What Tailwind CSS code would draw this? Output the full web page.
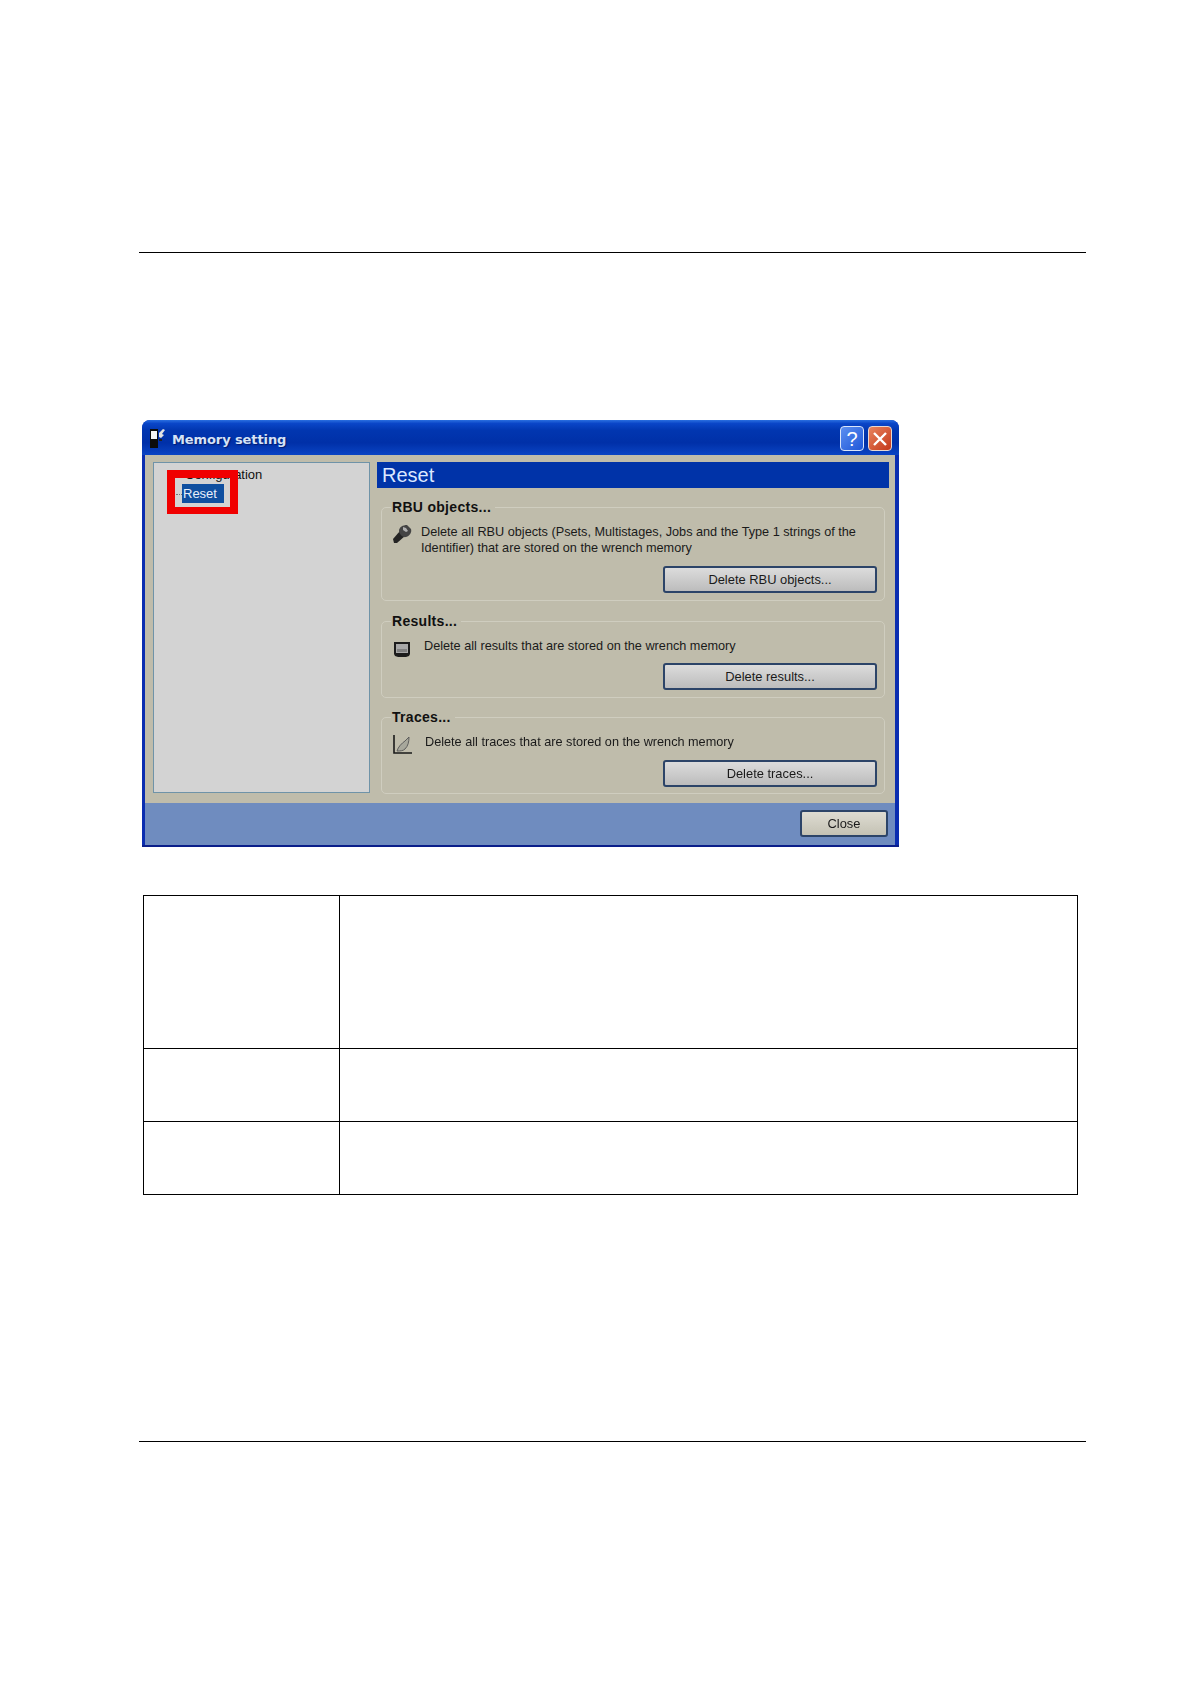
<!DOCTYPE html>
<html lang="en">
<head>
  <meta charset="UTF-8">
  <meta name="viewport" content="width=device-width, initial-scale=1">
  <title>Memory setting</title>
  <script src="https://cdn.jsdelivr.net/npm/@tailwindcss/browser@4"></script>
</head>
<body class="bg-white font-['Liberation_Sans',Arial,sans-serif]">
  <div class="h-[1684px] pt-[252px] overflow-hidden">
    <div class="ml-[139px] w-[947px] h-px bg-black"></div>

    <!-- dialog screenshot -->
    <div class="relative mt-[167px] ml-[142px] w-[757px] h-[427px] flex flex-col rounded-t-lg overflow-hidden blur-[0.5px] bg-[#0a2db0]">
      <div class="h-[35px] shrink-0 flex items-center pt-[2px] pl-[8px] pr-[7px] bg-[linear-gradient(180deg,#2a6fe0_0%,#0a46c8_10%,#0136b0_30%,#0030a8_65%,#0a44c4_100%)]">
        <svg class="w-[17px] h-[19px] shrink-0" viewBox="0 0 17 19">
          <path d="M0 0h8v19H0z" fill="#0c0c0c"/>
          <path d="M1 2h6v8H1z" fill="#f4f4f4"/>
          <path d="M9 4l4-4 2 1-3 4 2 1-3 3-2-1z" fill="#e2e2e2"/>
          <path d="M9 10h3v2H9z" fill="#222"/>
        </svg>
        <span class="ml-[5px] mt-[2px] text-[13px] font-bold tracking-[-0.1px] text-[#d5e2f7] font-['DejaVu_Sans',sans-serif] [text-shadow:1px_1px_1px_#001a70]">Memory setting</span>
        <div class="ml-auto flex gap-[4px]">
          <div class="w-[24px] h-[25px] rounded-[4px] border border-[#dbe6fa] bg-[linear-gradient(135deg,#5c8ff0,#1f57d8)] flex items-center justify-center text-[20px] leading-none text-white">?</div>
          <div class="w-[24px] h-[25px] rounded-[4px] border border-[#e8d8d0] bg-[linear-gradient(135deg,#e8835e,#c4391a)] flex items-center justify-center">
            <svg class="w-[16px] h-[16px]" viewBox="0 0 16 16"><path d="M2 2l12 12M14 2L2 14" stroke="#fff" stroke-width="2.4" fill="none"/></svg>
          </div>
        </div>
      </div>

      <div class="flex-1 ml-[3px] mr-[4px] bg-[#bfbcab] flex pt-[7px] pl-[8px] pr-[6px] gap-[7px]">
        <div class="relative w-[217px] h-[331px] shrink-0 border border-[#6f93a8] bg-[#d3d3d3] text-[13px] text-[#111]">
          <div class="pl-[31px] pt-[4px] leading-[15px]">Configuration</div>
          <div class="absolute left-[22px] top-[31px] w-[6px] border-t border-dotted border-[#777]"></div>
          <div class="absolute left-[28px] top-[21px] w-[42px] h-[19px] bg-[#0f4fa0] text-[#e8eefa] pl-[1px] leading-[19px]">Reset</div>
          <div class="absolute left-[13px] top-[7px] w-[71px] h-[44px] border-[8px] border-b-[7px] border-[#f00000]"></div>
        </div>

        <div class="flex-1 min-w-0">
          <div class="h-[26px] bg-[#0033a8] pl-[5px] text-[20px] leading-[26px] text-[#dce8ff]">Reset</div>

          <fieldset class="mt-[10px] mx-[4px] h-[103px] border border-[#cfcdbf] rounded-[5px]">
            <legend class="ml-[9px] px-[1px] pr-[4px] text-[14px] leading-[18px] font-bold tracking-[0.3px] text-[#111]">RBU objects...</legend>
            <div class="mt-[9px] flex items-start pl-[10px]">
              <svg class="w-[20px] h-[20px] shrink-0 -mt-px" viewBox="0 0 20 20">
                <path d="M1 15l7-8 5 5-8 7H2z" fill="#242424"/>
                <path d="M7 7c0-4 4-6 8-6l4 4c1 3-1 7-5 8-3 1-7-3-7-6z" fill="#444"/>
                <path d="M11 3l3 1 2 3-2 1-3-2z" fill="#b0b0b0"/>
              </svg>
              <p class="ml-[9px] w-[445px] text-[12.7px] leading-[15.5px] text-[#1a1a1a]">Delete all RBU objects (Psets, Multistages, Jobs and the Type 1 strings of the Identifier) that are stored on the wrench memory</p>
            </div>
            <div class="flex justify-end mt-[10px] pr-[7px]">
              <button class="w-[214px] h-[27px] rounded-[3px] border-2 border-[#2c4468] bg-[linear-gradient(180deg,#dcdcdc,#bcbcbc)] text-[12.9px] text-[#1a1a1a]">Delete RBU objects...</button>
            </div>
          </fieldset>

          <fieldset class="mt-[11px] mx-[4px] h-[86px] border border-[#cfcdbf] rounded-[5px]">
            <legend class="ml-[9px] px-[1px] pr-[4px] text-[14px] leading-[18px] font-bold tracking-[0.3px] text-[#111]">Results...</legend>
            <div class="mt-[9px] flex items-start pl-[11px]">
              <svg class="w-[18px] h-[17px] shrink-0 mt-[2px]" viewBox="0 0 18 17">
                <path d="M1 1h16v12l-1 2-3 1H5l-3-1-1-2z" fill="#1c1c1c"/>
                <path d="M3 3h12v9H3z" fill="#a8a8a8"/>
                <path d="M4 8h10v3H4z" fill="#808080"/>
              </svg>
              <p class="ml-[13px] text-[12.7px] leading-[15.5px] text-[#1a1a1a]">Delete all results that are stored on the wrench memory</p>
            </div>
            <div class="flex justify-end mt-[5px] pr-[7px]">
              <button class="w-[214px] h-[27px] rounded-[3px] border-2 border-[#2c4468] bg-[linear-gradient(180deg,#dcdcdc,#bcbcbc)] text-[12.9px] text-[#1a1a1a]">Delete results...</button>
            </div>
          </fieldset>

          <fieldset class="mt-[10px] mx-[4px] h-[86px] border border-[#cfcdbf] rounded-[5px]">
            <legend class="ml-[9px] px-[1px] pr-[4px] text-[14px] leading-[18px] font-bold tracking-[0.3px] text-[#111]">Traces...</legend>
            <div class="mt-[9px] flex items-start pl-[11px]">
              <svg class="w-[19px] h-[19px] shrink-0" viewBox="0 0 19 19">
                <path d="M1 0v18h18" fill="none" stroke="#1a1a1a" stroke-width="1.6"/>
                <path d="M4 16c1-4 5-8 8-10l4-4c0 5-1 9-4 12-2 2-5 2-8 2z" fill="#a8a89c" stroke="#555" stroke-width="0.9"/>
              </svg>
              <p class="ml-[13px] text-[12.7px] leading-[15.5px] text-[#1a1a1a]">Delete all traces that are stored on the wrench memory</p>
            </div>
            <div class="flex justify-end mt-[6px] pr-[7px]">
              <button class="w-[214px] h-[27px] rounded-[3px] border-2 border-[#2c4468] bg-[linear-gradient(180deg,#dcdcdc,#bcbcbc)] text-[12.9px] text-[#1a1a1a]">Delete traces...</button>
            </div>
          </fieldset>
        </div>
      </div>

      <div class="h-[42px] shrink-0 ml-[3px] mr-[4px] bg-[#6f8cbf] flex justify-end items-start pt-[7px] pr-[7px]">
        <button class="w-[88px] h-[27px] rounded-[3px] border-2 border-[#2c4468] bg-[linear-gradient(180deg,#dedcd2,#c4c2b4)] text-[12.9px] text-[#1a1a1a]">Close</button>
      </div>
      <div class="h-[2px] shrink-0 bg-[#0a1e8a]"></div>
    </div>

    <!-- empty table -->
    <table class="mt-[48px] ml-[143px] w-[935px] table-fixed border-collapse border border-black">
      <tbody>
        <tr class="h-[153px]">
          <td class="w-[196px] border border-black"></td>
          <td class="border border-black"></td>
        </tr>
        <tr class="h-[73px]">
          <td class="border border-black"></td>
          <td class="border border-black"></td>
        </tr>
        <tr class="h-[73px]">
          <td class="border border-black"></td>
          <td class="border border-black"></td>
        </tr>
      </tbody>
    </table>

    <div class="mt-[246px] ml-[139px] w-[947px] h-px bg-black"></div>
  </div>
</body>
</html>
